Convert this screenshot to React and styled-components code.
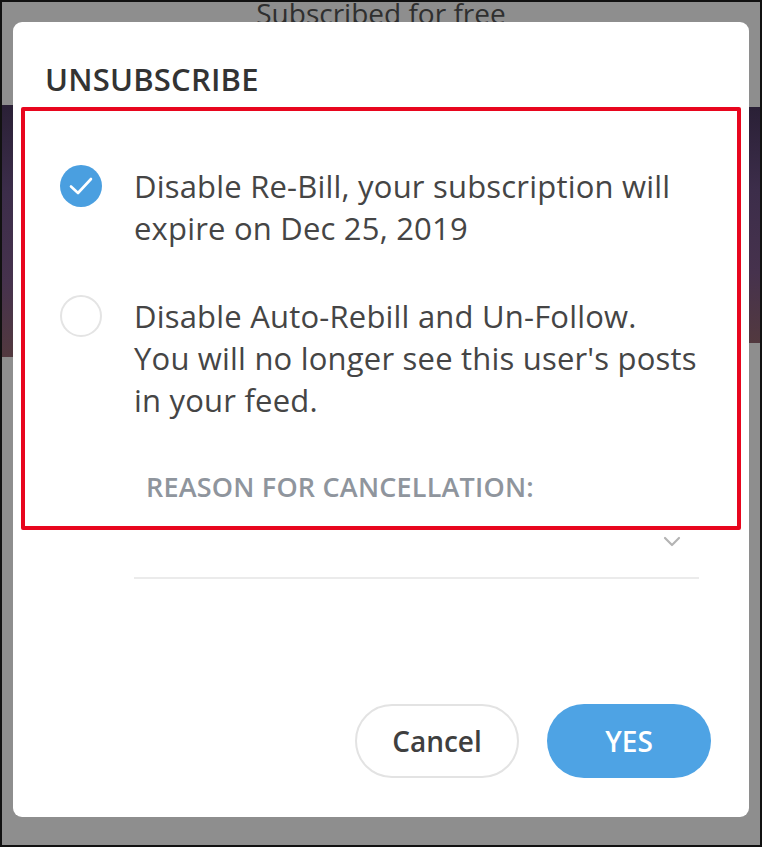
import React from "react";
import styled, { createGlobalStyle } from "styled-components";

const Global = createGlobalStyle`
  html, body { margin: 0; padding: 0; }
  body { width: 762px; height: 847px; overflow: hidden; font-family: "Open Sans", "Noto Sans", sans-serif; }
  #root { width: 762px; height: 847px; }
`;

const Screen = styled.div`
  position: relative;
  box-sizing: border-box;
  width: 762px;
  height: 847px;
  border: 2px solid #111;
  background: #8e8e8e;
  overflow: hidden;
  display: flex;
  flex-direction: column;
  align-items: center;
`;

const BackdropTitle = styled.div`
  position: absolute;
  top: -3px;
  left: 0;
  right: 0;
  text-align: center;
  font-size: 28px;
  line-height: 28px;
  color: #2f2f2f;
`;

const BackStripe = styled.div`
  position: absolute;
  top: ${(p) => p.$top}px;
  height: ${(p) => p.$h}px;
  ${(p) => (p.$side === "left" ? "left: 0;" : "right: 0;")}
  width: 14px;
  background: linear-gradient(180deg, #2a2036 0%, #3c2d4a 35%, #46324d 70%, #52393f 100%);
`;

const Modal = styled.div`
  position: relative;
  z-index: 1;
  box-sizing: border-box;
  margin-top: 20px;
  width: 736px;
  height: 795px;
  background: #fff;
  border-radius: 9px;
  padding: 39px 32px 0 32px;
  display: flex;
  flex-direction: column;
`;

const Title = styled.h2`
  margin: 0;
  font-size: 31px;
  font-weight: 600;
  color: #333;
  letter-spacing: 0.2px;
  line-height: 36px;
`;

const Highlight = styled.div`
  margin: 10px -24px 0 -24px;
  border: 4px solid #e8061e;
  border-radius: 2px;
  padding: 54px 24px 0 24px;
  height: 423px;
  box-sizing: border-box;
  display: flex;
  flex-direction: column;
`;

const Option = styled.div`
  display: flex;
  align-items: flex-start;
  gap: 32px;
  margin-bottom: ${(p) => p.$mb}px;
`;

const Radio = styled.span`
  flex: 0 0 auto;
  box-sizing: border-box;
  width: 42px;
  height: 42px;
  margin-left: 11px;
  border-radius: 50%;
  display: flex;
  align-items: center;
  justify-content: center;
  background: ${(p) => (p.$checked ? "#4a9fe0" : "#fff")};
  border: ${(p) => (p.$checked ? "none" : "2px solid #e4e4e4")};
`;

const OptionText = styled.p`
  margin: 0;
  font-size: 31px;
  line-height: 42px;
  color: #454545;
  letter-spacing: 0.2px;
`;

const ReasonLabel = styled.div`
  margin-left: 97px;
  font-size: 27px;
  font-weight: 600;
  color: #8f959d;
  letter-spacing: 0.2px;
  line-height: 36px;
`;

const SelectRow = styled.div`
  margin: 0 18px 0 89px;
  height: 41px;
  border-bottom: 2px solid #ebebeb;
  display: flex;
  justify-content: flex-end;
  align-items: flex-start;
  padding: 6px 18px 0 0;
  box-sizing: content-box;
`;

const Actions = styled.div`
  margin-top: 125px;
  display: flex;
  justify-content: flex-end;
  gap: 28px;
  padding-right: 6px;
`;

const Button = styled.button`
  box-sizing: border-box;
  width: 164px;
  height: 74px;
  border-radius: 37px;
  font-family: "Open Sans", "Noto Sans", sans-serif;
  font-size: 28px;
  font-weight: 600;
  cursor: pointer;
  border: ${(p) => (p.$primary ? "none" : "2px solid #e3e3e3")};
  background: ${(p) => (p.$primary ? "#4ea3e4" : "#fff")};
  color: ${(p) => (p.$primary ? "#fff" : "#3f3f3f")};
`;

function Check() {
  return (
    <svg width="26" height="22" viewBox="0 0 26 22" fill="none">
      <path d="M3 11.5l7 6.5L23 4" stroke="#fff" strokeWidth="2.6" strokeLinecap="round" strokeLinejoin="round" />
    </svg>
  );
}

function Chevron() {
  return (
    <svg width="18" height="12" viewBox="0 0 18 12" fill="none">
      <path d="M2 2l7 7 7-7" stroke="#b4b4b4" strokeWidth="2.2" strokeLinecap="round" strokeLinejoin="round" />
    </svg>
  );
}

export default function App() {
  return (
    <>
      <Global />
      <Screen>
        <BackdropTitle>Subscribed for free</BackdropTitle>
        <BackStripe $side="left" $top={103} $h={252} />
        <BackStripe $side="right" $top={105} $h={236} />
        <Modal>
          <Title>UNSUBSCRIBE</Title>
          <Highlight>
            <Option $mb={46}>
              <Radio $checked>
                <Check />
              </Radio>
              <OptionText>
                Disable Re-Bill, your subscription will
                <br />
                expire on Dec 25, 2019
              </OptionText>
            </Option>
            <Option $mb={48}>
              <Radio />
              <OptionText>
                Disable Auto-Rebill and Un-Follow.
                <br />
                You will no longer see this user's posts
                <br />
                in your feed.
              </OptionText>
            </Option>
            <ReasonLabel>REASON FOR CANCELLATION:</ReasonLabel>
          </Highlight>
          <SelectRow>
            <Chevron />
          </SelectRow>
          <Actions>
            <Button>Cancel</Button>
            <Button $primary>YES</Button>
          </Actions>
        </Modal>
      </Screen>
    </>
  );
}
